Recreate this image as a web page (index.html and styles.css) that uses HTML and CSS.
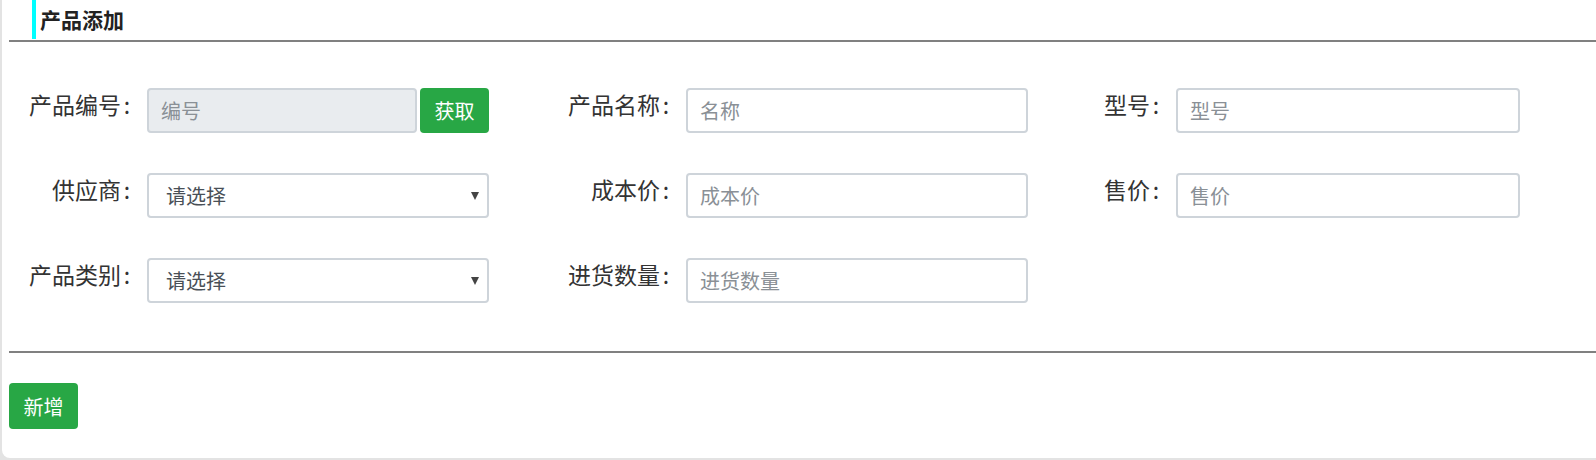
FILE: index.html
```html
<!DOCTYPE html>
<html lang="zh-CN">
<head>
<meta charset="utf-8">
<title>产品添加</title>
<link rel="stylesheet" href="styles.css">
</head>
<body>
<div class="card">
  <div class="title-wrap"><div class="title">产品添加</div></div>
  <hr class="rule rule-top">
  <div class="form-grid">
    <label class="lbl">产品编号<span class="colon">:</span></label>
    <div class="group">
      <input class="input" disabled placeholder="编号">
      <button class="btn btn-get">获取</button>
    </div>
    <label class="lbl">产品名称<span class="colon">:</span></label>
    <input class="input" placeholder="名称">
    <label class="lbl">型号<span class="colon">:</span></label>
    <input class="input" placeholder="型号">

    <label class="lbl">供应商<span class="colon">:</span></label>
    <div class="select-wrap">
      <select class="input select"><option>请选择</option></select>
      <span class="arrow"></span>
    </div>
    <label class="lbl">成本价<span class="colon">:</span></label>
    <input class="input" placeholder="成本价">
    <label class="lbl">售价<span class="colon">:</span></label>
    <input class="input" placeholder="售价">

    <label class="lbl">产品类别<span class="colon">:</span></label>
    <div class="select-wrap">
      <select class="input select"><option>请选择</option></select>
      <span class="arrow"></span>
    </div>
    <label class="lbl">进货数量<span class="colon">:</span></label>
    <input class="input" placeholder="进货数量">
  </div>
  <hr class="rule">
  <div class="actions"><button class="btn">新增</button></div>
</div>
</body>
</html>
```
FILE: styles.css
```css
html, body {
  margin: 0;
  padding: 0;
}
body {
  background: #e3e3e3;
  font-family: "Noto Sans CJK SC", sans-serif;
  overflow: hidden;
}
.card {
  margin-left: 2px;
  background: #fff;
  border-bottom-left-radius: 8px;
  padding: 0 0 0 7px;
}
.title-wrap {
  padding-left: 23px;
}
.title {
  border-left: 4px solid #00ffff;
  height: 39px;
  line-height: 39px;
  padding-left: 4px;
  font-size: 21px;
  font-weight: bold;
  color: #222;
}
.rule {
  margin: 0;
  border: 0;
  height: 2px;
  background: #808080;
}
.rule-top {
  margin-top: 1px;
}
.form-grid {
  display: grid;
  grid-template-columns: 138px 342px 197px 342px 148px 344px;
  grid-auto-rows: 45px;
  row-gap: 40px;
  padding: 46px 0 48px;
}
.lbl {
  font-size: 23px;
  line-height: 33px;
  color: #333;
  text-align: right;
  padding-right: 14px;
  white-space: nowrap;
}
.colon {
  display: inline-block;
  width: 12px;
  text-align: center;
}
.input {
  box-sizing: border-box;
  height: 45px;
  width: 100%;
  border: 2px solid #ced4da;
  border-radius: 4px;
  padding: 0 12px;
  font-size: 20px;
  font-family: inherit;
  color: #495057;
  background: #fff;
  outline: none;
  margin: 0;
}
.input::placeholder {
  color: #8a9096;
}
.input:disabled {
  background: #e9ecef;
}
.group {
  display: flex;
  gap: 3px;
}
.group .input {
  flex: 1;
  min-width: 0;
}
.btn {
  background: #28a745;
  color: #fff;
  border: 0;
  border-radius: 4px;
  font-size: 20px;
  font-family: inherit;
  height: 46px;
  width: 69px;
  padding: 0;
  margin: 0;
}
.btn-get {
  height: 45px;
}
.select-wrap {
  position: relative;
}
.select {
  appearance: none;
  -webkit-appearance: none;
  padding-left: 17px;
}
.arrow {
  position: absolute;
  right: 10px;
  top: 19px;
  width: 0;
  height: 0;
  border-left: 4.5px solid transparent;
  border-right: 4.5px solid transparent;
  border-top: 8px solid #444;
  pointer-events: none;
}
.actions {
  padding: 30px 0 29px 0;
}
```
